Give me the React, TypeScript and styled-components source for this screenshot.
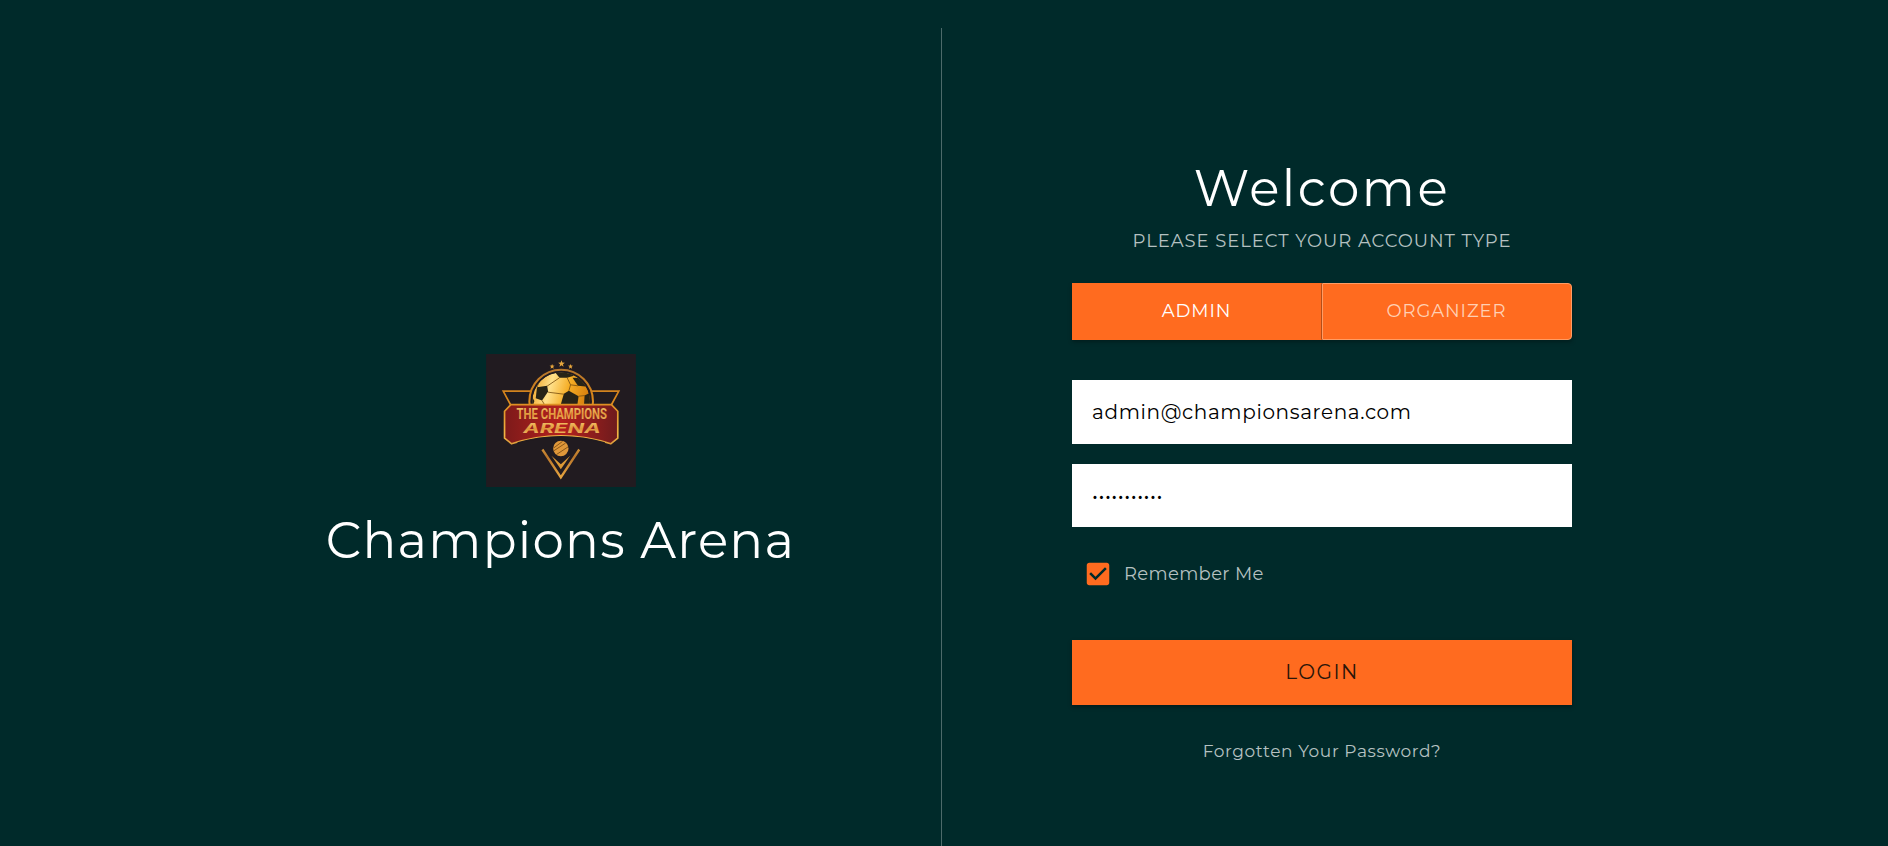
import React from "react";
import styled, { createGlobalStyle, css } from "styled-components";

const GlobalStyle = createGlobalStyle`
  * { box-sizing: border-box; }
  html, body { margin: 0; padding: 0; background: #002a2a; }
  body { font-family: Montserrat, Inter, sans-serif; color: #fff; overflow: hidden; }
  input, button { font-family: inherit; }
`;

const Page = styled.main`
  display: grid;
  grid-template-columns: 942px 1fr;
  height: 846px;
  padding-top: 28px;
  background: #002a2a;
`;

const BrandPanel = styled.section`
  display: flex;
  flex-direction: column;
  align-items: center;
  padding: 326px 0 0 180px;
  border-right: 1px solid #4d6a6a;
`;

const Heading = styled.h1<{ $spacing: number }>`
  margin: 0;
  font-size: 50px;
  font-weight: 400;
  line-height: 60px;
  letter-spacing: ${(p) => p.$spacing}px;
  white-space: nowrap;
`;

const BrandName = styled(Heading)`
  margin-top: 24px;
`;

const FormPanel = styled.section`
  display: flex;
  flex-direction: column;
  align-items: center;
  width: 500px;
  margin-left: 130px;
  padding-top: 131px;
`;

const Subtitle = styled.p`
  margin: 7px 0 0;
  font-size: 18px;
  line-height: 30px;
  letter-spacing: 0.95px;
  color: #b5c1c1;
  white-space: nowrap;
`;

const AccountTabs = styled.div`
  display: grid;
  grid-template-columns: 250px 250px;
  width: 100%;
  height: 57px;
  margin-top: 27px;
  box-shadow: 0 2px 4px rgba(0, 0, 0, 0.3);
`;

const AccountTab = styled.button<{ $active?: boolean }>`
  padding: 0 1px 2px 0;
  background: #ff6b1f;
  border: 1px solid #ff6b1f;
  font-size: 18px;
  letter-spacing: 0.9px;
  color: #fff;
  ${(p) =>
    p.$active
      ? css`border-right-color: #b54d18;`
      : css`
          border-color: #ff9c64;
          border-radius: 0 4px 4px 0;
          color: #ffd0b4;
        `}
`;

const Field = styled.input`
  width: 100%;
  height: 64px;
  padding: 0 20px;
  border: 0;
  outline: 0;
  background: #fff;
  color: #000;
  font-size: 20px;
  letter-spacing: 0.64px;
`;

const EmailField = styled(Field)`
  margin-top: 40px;
`;

const PasswordField = styled(Field)`
  height: 63px;
  margin-top: 20px;
  letter-spacing: 0.55px;
`;

const Remember = styled.label`
  display: flex;
  align-items: center;
  align-self: flex-start;
  gap: 11px;
  height: 30px;
  margin: 32px 0 0 11px;
  font-size: 18px;
  color: #b5c1c1;
`;

const RememberText = styled.span`
  letter-spacing: 0.33px;
`;

const LoginButton = styled.button`
  width: 100%;
  height: 65px;
  margin-top: 51px;
  padding: 0 0 2px;
  border: 0;
  background: #ff6b1f;
  box-shadow: 0 2px 4px rgba(0, 0, 0, 0.35);
  color: #2a1509;
  font-size: 20px;
  letter-spacing: 1.5px;
`;

const ForgotLink = styled.a`
  margin-top: 31px;
  font-size: 17px;
  line-height: 30px;
  letter-spacing: 0.6px;
  color: #b5c1c1;
  white-space: nowrap;
`;

const CheckedBox = () => (
  <svg width="30" height="30" viewBox="0 0 24 24" fill="#ff6b1f">
    <path d="M19 3H5c-1.11 0-2 .9-2 2v14c0 1.1.89 2 2 2h14c1.11 0 2-.9 2-2V5c0-1.1-.89-2-2-2zm-9 14l-5-5 1.41-1.41L10 14.17l7.59-7.59L19 8l-9 9z" />
  </svg>
);

const star = "0,-10 2.6,-3.4 10,-3 4.2,1.5 6.2,9 0,4.9 -6.2,9 -4.2,1.5 -10,-3 -2.6,-3.4";

const Logo = () => (
  <svg width="150" height="133" viewBox="36 28 447 397">
    <defs>
      <linearGradient id="gold" gradientUnits="userSpaceOnUse" x1="0" y1="75" x2="0" y2="400">
        <stop offset="0" stopColor="#b5762c" />
        <stop offset="0.25" stopColor="#d9861a" />
        <stop offset="0.6" stopColor="#f3b545" />
        <stop offset="0.8" stopColor="#b9762b" />
        <stop offset="1" stopColor="#e8a640" />
      </linearGradient>
      <linearGradient id="lettering" x1="0" y1="0" x2="0" y2="1">
        <stop offset="0" stopColor="#f3c56a" />
        <stop offset="0.5" stopColor="#e0963a" />
        <stop offset="1" stopColor="#f3c878" />
      </linearGradient>
      <linearGradient id="ball" x1="0" y1="0" x2="1" y2="0.3">
        <stop offset="0" stopColor="#ee9a18" />
        <stop offset="0.35" stopColor="#ffe08a" />
        <stop offset="0.65" stopColor="#f5ad25" />
        <stop offset="1" stopColor="#d67f0d" />
      </linearGradient>
      <linearGradient id="banner" x1="0" y1="0" x2="1" y2="0">
        <stop offset="0" stopColor="#7c1a1a" />
        <stop offset="0.5" stopColor="#b5211d" />
        <stop offset="1" stopColor="#6d1b1d" />
      </linearGradient>
      <clipPath id="ballClip"><circle cx="260" cy="169" r="86" /></clipPath>
    </defs>
    <rect x="36" y="28" width="447" height="397" fill="#211b20" />
    <g fill="#e5a53c">
      <polygon points={star} transform="translate(261 57)" />
      <polygon points={star} transform="translate(233 65) scale(.75)" />
      <polygon points={star} transform="translate(288 65) scale(.75)" />
    </g>
    <path d="M172 139H87L113 187 M348 139H432L406 187" fill="none" stroke="url(#gold)" strokeWidth="5" />
    <circle cx="260" cy="170" r="95" fill="#211b20" stroke="url(#gold)" strokeWidth="6" />
    <g clipPath="url(#ballClip)">
      <circle cx="260" cy="169" r="86" fill="url(#ball)" />
      <g fill="#282417">
        <path d="M240 80L255 99L278 99L298 93L284 80Z" />
        <path d="M188 127L218 123L221 140L203 167L184 160Z" />
        <path d="M268 147L283 138L312 154L308 182H258Z" />
        <path d="M294 99L318 100L340 126L310 123Z" />
        <path d="M330 152L349 142V182H328Z" />
        <path d="M170 150L180 168L176 182H164Z" />
      </g>
      <path d="M255 99L218 124M278 99L288 120L283 138M288 120L310 123M221 142L268 148M203 167L212 182M312 154L331 152M188 127L196 106" fill="none" stroke="#7d520f" strokeWidth="2.5" />
    </g>
    <path d="M110 179H410L429 199V279L408 296Q335 272 260 272Q185 272 112 296L91 279V199Z" fill="url(#banner)" stroke="url(#gold)" strokeWidth="5" />
    <path d="M130 294Q195 275 260 275Q325 275 390 294" fill="none" stroke="#211b20" strokeWidth="5" />
    <text x="127" y="223" textLength="270" lengthAdjust="spacingAndGlyphs" fontFamily="Roboto, sans-serif" fontWeight="700" fontSize="43" fill="url(#lettering)">THE CHAMPIONS</text>
    <text x="147" y="265" textLength="231" lengthAdjust="spacingAndGlyphs" fontFamily="Inter, sans-serif" fontStyle="italic" fontWeight="700" fontSize="38" fill="url(#lettering)">ARENA</text>
    <circle cx="259" cy="310" r="23" fill="#e0983a" />
    <path d="M237 309L264 289M238 317L273 294M246 328L281 305" stroke="#7a4a12" strokeWidth="2.5" />
    <path d="M204 313L259 396L314 313" fill="none" stroke="url(#gold)" strokeWidth="7" />
    <path d="M231 332L259 372L287 332L259 357Z" fill="#dc9935" />
  </svg>
);

export default function App() {
  return (
    <>
      <GlobalStyle />
      <Page>
        <BrandPanel>
          <Logo />
          <BrandName $spacing={1.25}>Champions Arena</BrandName>
        </BrandPanel>
        <FormPanel>
          <Heading $spacing={2.5}>Welcome</Heading>
          <Subtitle>PLEASE SELECT YOUR ACCOUNT TYPE</Subtitle>
          <AccountTabs>
            <AccountTab $active>ADMIN</AccountTab>
            <AccountTab>ORGANIZER</AccountTab>
          </AccountTabs>
          <EmailField type="text" defaultValue="admin@championsarena.com" />
          <PasswordField type="password" defaultValue="championsar" />
          <Remember>
            <CheckedBox />
            <RememberText>Remember Me</RememberText>
          </Remember>
          <LoginButton>LOGIN</LoginButton>
          <ForgotLink>Forgotten Your Password?</ForgotLink>
        </FormPanel>
      </Page>
    </>
  );
}
